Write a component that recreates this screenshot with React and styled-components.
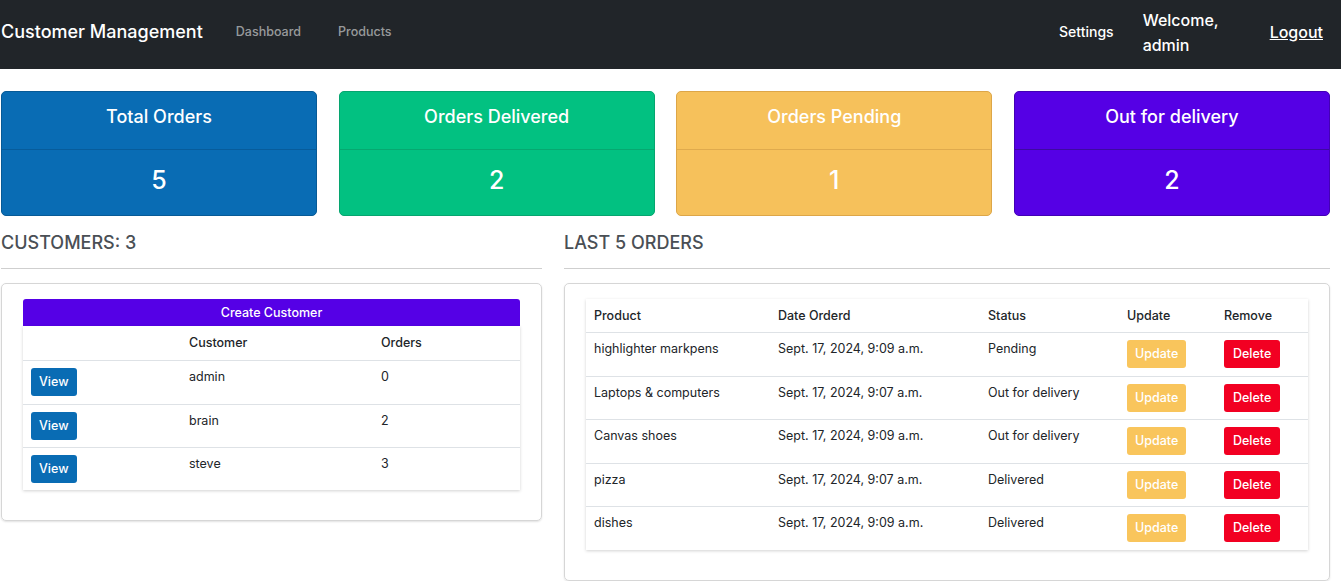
import React from 'react';
import styled, { createGlobalStyle } from 'styled-components';

const GlobalStyle = createGlobalStyle`
  body {
    margin: 0;
    font-family: Inter, "Liberation Sans", sans-serif;
    color: #212529;
    background: #fff;
  }
  * { box-sizing: border-box; }
`;

const Navbar = styled.nav`
  height: 69px;
  background: #212529;
  display: flex;
  align-items: center;
  padding: 0 18px 6px 1px;
`;

const Brand = styled.a`
  color: #fff;
  font-size: 18px;
  font-weight: 500;
  margin-right: 33px;
`;

const NavLink = styled.a`
  color: rgba(255, 255, 255, 0.55);
  font-size: 12.5px;
  font-weight: 500;
  margin-right: 37px;
`;

const Spacer = styled.div`
  flex: 1;
`;

const RightLink = styled.a`
  color: #fff;
  font-size: 14px;
  font-weight: 500;
  margin-right: 29px;
`;

const Welcome = styled.span`
  color: #fff;
  font-size: 16px;
  font-weight: 500;
  line-height: 25px;
  width: 80px;
  margin: 2px 47px 0 0;
`;

const Logout = styled.a`
  color: #fff;
  font-size: 16px;
  font-weight: 500;
  text-decoration: underline;
`;

const Container = styled.main`
  width: 1329px;
  margin-left: 1px;
  padding-top: 22px;
`;

const StatRow = styled.div`
  display: grid;
  grid-template-columns: repeat(4, 316px);
  justify-content: space-between;
`;

const StatCard = styled.div`
  background: ${(p) => p.bg};
  border: 1px solid ${(p) => p.border};
  border-radius: 5px;
  color: #fff;
  text-align: center;
  overflow: hidden;
`;

const StatHeader = styled.div`
  height: 58px;
  line-height: 50px;
  font-size: 18px;
  font-weight: 500;
  border-bottom: 1px solid ${(p) => p.line};
`;

const StatBody = styled.div`
  height: 65px;
  line-height: 61px;
  font-size: 25px;
  font-weight: 500;
`;

const Lower = styled.div`
  display: grid;
  grid-template-columns: 541px 766px;
  justify-content: space-between;
  margin-top: 15px;
`;

const Heading = styled.h5`
  margin: 0;
  font-size: 18px;
  font-weight: 500;
  line-height: 24px;
  color: #4a4f55;
`;

const Rule = styled.hr`
  margin: 13px 0 14px;
  border: 0;
  border-top: 1px solid #cfcfcf;
`;

const Panel = styled.div`
  border: 1px solid #d6d6d6;
  border-radius: 5px;
  box-shadow: 0 1px 2px rgba(0, 0, 0, 0.12);
  padding: 15px 21px 30px;
`;

const CreateButton = styled.button`
  display: block;
  width: 100%;
  height: 27px;
  border: 0;
  border-radius: 3px 3px 0 0;
  background: #5500e6;
  color: #fff;
  font-family: inherit;
  font-size: 12.5px;
  font-weight: 500;
`;

const Table = styled.table`
  width: 100%;
  border-collapse: collapse;
  font-size: 12.5px;
  box-shadow: 0 1px 3px rgba(0, 0, 0, 0.18);
  table-layout: fixed;

  tbody tr:first-child td {
    height: 44px;
  }
`;

const OrdersTable = styled(Table)`
  tbody tr:nth-child(3) td,
  tbody tr:nth-child(5) td {
    height: 44px;
  }
`;

const Th = styled.th`
  text-align: left;
  font-weight: 500;
  padding: 0 8px;
  height: ${(p) => p.h || 34}px;
  vertical-align: middle;
  border-bottom: 1px solid #dee2e6;
`;

const Td = styled.td`
  padding: 8px;
  height: 43px;
  vertical-align: top;
  line-height: 16px;
  border-top: 1px solid #dee2e6;
`;

const ButtonCell = styled(Td)`
  padding-top: 7px;
  padding-bottom: 0;
`;

const Button = styled.button`
  display: block;
  height: 28px;
  padding: 0 ${(p) => p.px || 8}px;
  border: 0;
  border-radius: 3px;
  background: ${(p) => p.bg};
  color: #fff;
  font-family: inherit;
  font-size: 12.5px;
  font-weight: 500;
`;

const stats = [
  { title: 'Total Orders', value: 5, bg: '#096cb4', border: '#075a96', line: '#075c9b' },
  { title: 'Orders Delivered', value: 2, bg: '#02c181', border: '#06a56f', line: '#06a870' },
  { title: 'Orders Pending', value: 1, bg: '#f6c15b', border: '#dda648', line: '#dfaa4d' },
  { title: 'Out for delivery', value: 2, bg: '#5500e5', border: '#4300b5', line: '#3d0aa0' },
];

const customers = [
  { name: 'admin', orders: 0 },
  { name: 'brain', orders: 2 },
  { name: 'steve', orders: 3 },
];

const orders = [
  { product: 'highlighter markpens', date: 'Sept. 17, 2024, 9:09 a.m.', status: 'Pending' },
  { product: 'Laptops & computers', date: 'Sept. 17, 2024, 9:07 a.m.', status: 'Out for delivery' },
  { product: 'Canvas shoes', date: 'Sept. 17, 2024, 9:09 a.m.', status: 'Out for delivery' },
  { product: 'pizza', date: 'Sept. 17, 2024, 9:07 a.m.', status: 'Delivered' },
  { product: 'dishes', date: 'Sept. 17, 2024, 9:09 a.m.', status: 'Delivered' },
];

export default function App() {
  return (
    <>
      <GlobalStyle />
      <Navbar>
        <Brand>Customer Management</Brand>
        <NavLink>Dashboard</NavLink>
        <NavLink>Products</NavLink>
        <Spacer />
        <RightLink>Settings</RightLink>
        <Welcome>Welcome, admin</Welcome>
        <Logout>Logout</Logout>
      </Navbar>
      <Container>
        <StatRow>
          {stats.map((s) => (
            <StatCard key={s.title} bg={s.bg} border={s.border}>
              <StatHeader line={s.line}>{s.title}</StatHeader>
              <StatBody>{s.value}</StatBody>
            </StatCard>
          ))}
        </StatRow>
        <Lower>
          <section>
            <Heading>CUSTOMERS: 3</Heading>
            <Rule />
            <Panel>
              <CreateButton>Create Customer</CreateButton>
              <Table>
                <colgroup>
                  <col style={{ width: '158px' }} />
                  <col style={{ width: '192px' }} />
                  <col />
                </colgroup>
                <thead>
                  <tr>
                    <Th />
                    <Th>Customer</Th>
                    <Th>Orders</Th>
                  </tr>
                </thead>
                <tbody>
                  {customers.map((c) => (
                    <tr key={c.name}>
                      <ButtonCell>
                        <Button bg="#096cb4">View</Button>
                      </ButtonCell>
                      <Td>{c.name}</Td>
                      <Td>{c.orders}</Td>
                    </tr>
                  ))}
                </tbody>
              </Table>
            </Panel>
          </section>
          <section>
            <Heading>LAST 5 ORDERS</Heading>
            <Rule />
            <Panel>
              <OrdersTable>
                <colgroup>
                  <col style={{ width: '184px' }} />
                  <col style={{ width: '210px' }} />
                  <col style={{ width: '139px' }} />
                  <col style={{ width: '97px' }} />
                  <col />
                </colgroup>
                <thead>
                  <tr>
                    <Th h={33}>Product</Th>
                    <Th h={33}>Date Orderd</Th>
                    <Th h={33}>Status</Th>
                    <Th h={33}>Update</Th>
                    <Th h={33}>Remove</Th>
                  </tr>
                </thead>
                <tbody>
                  {orders.map((o) => (
                    <tr key={o.product}>
                      <Td>{o.product}</Td>
                      <Td>{o.date}</Td>
                      <Td>{o.status}</Td>
                      <ButtonCell>
                        <Button bg="#f9c55c">Update</Button>
                      </ButtonCell>
                      <ButtonCell>
                        <Button bg="#f20022" px={9}>Delete</Button>
                      </ButtonCell>
                    </tr>
                  ))}
                </tbody>
              </OrdersTable>
            </Panel>
          </section>
        </Lower>
      </Container>
    </>
  );
}
